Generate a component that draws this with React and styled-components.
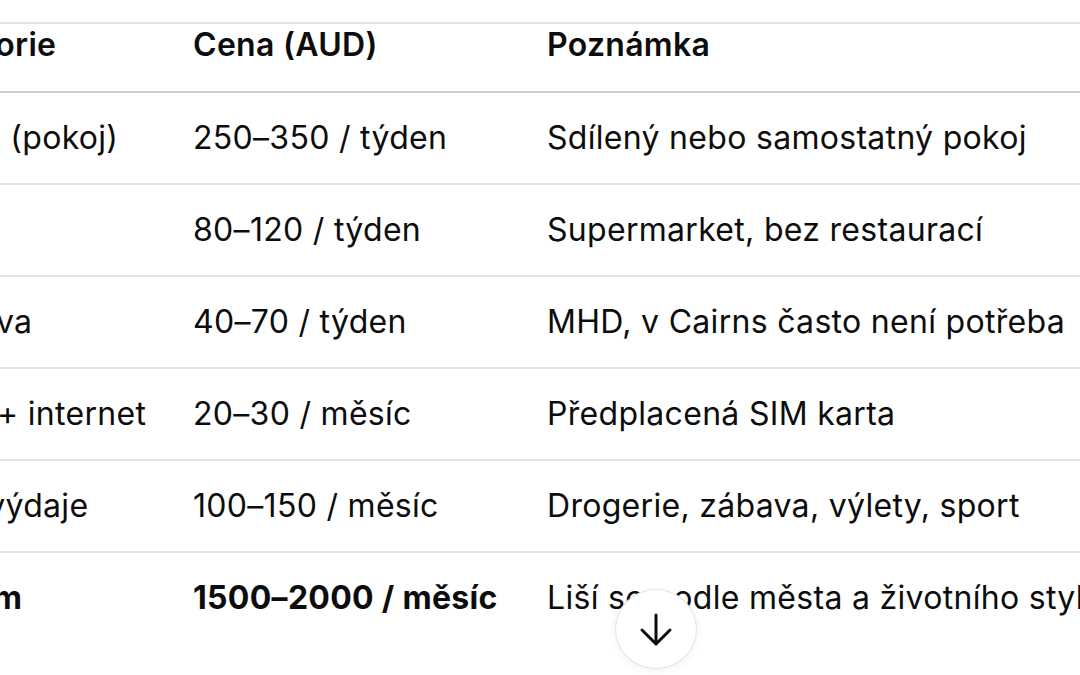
import React from 'react';
import styled, { createGlobalStyle } from 'styled-components';

const GlobalStyle = createGlobalStyle`
  html, body {
    margin: 0;
    padding: 0;
    background: #ffffff;
  }
  body {
    font-family: Inter, "Noto Sans", "Liberation Sans", sans-serif;
    color: #0d0d0d;
    -webkit-font-smoothing: antialiased;
  }
`;

const Screen = styled.div`
  position: relative;
  width: 1080px;
  height: 675px;
  overflow: hidden;
  padding-top: 22px;
  box-sizing: border-box;
`;

// the table is scrolled sideways, so its first column starts off-screen
const ScrollArea = styled.div`
  margin-left: -117px;
`;

const Table = styled.table`
  border-collapse: collapse;
  table-layout: fixed;
  width: 1400px;
  border-top: 2px solid #e2e2e2;
  font-size: 32px;
  line-height: 38px;
  letter-spacing: 0.3px;
`;

const HeadCell = styled.th`
  text-align: left;
  font-weight: 600;
  padding: 2px 20px 27px;
  border-bottom: 2px solid #cdcdcd;
  white-space: nowrap;
`;

const Row = styled.tr`
  & + & td {
    border-top: 2px solid #e3e3e3;
  }
`;

const Cell = styled.td`
  padding: 26px 20px;
  white-space: nowrap;
  font-weight: ${(p) => (p.$bold ? 650 : 400)};
  vertical-align: middle;
`;

const ScrollButton = styled.button`
  position: absolute;
  left: 615px;
  top: 589px;
  width: 82px;
  height: 80px;
  border-radius: 50%;
  background: #ffffff;
  border: 1px solid #e4e4e4;
  box-shadow: 0 2px 8px rgba(0, 0, 0, 0.06);
  padding: 0;
  display: flex;
  align-items: center;
  justify-content: center;
  cursor: pointer;
`;

const rows = [
  ['Nájem (pokoj)', '250–350 / týden', 'Sdílený nebo samostatný pokoj'],
  ['Jídlo', '80–120 / týden', 'Supermarket, bez restaurací'],
  ['Doprava', '40–70 / týden', 'MHD, v Cairns často není potřeba'],
  ['Mobil + internet', '20–30 / měsíc', 'Předplacená SIM karta'],
  ['Další výdaje', '100–150 / měsíc', 'Drogerie, zábava, výlety, sport'],
];

export default function App() {
  return (
    <>
      <GlobalStyle />
      <Screen>
        <ScrollArea>
          <Table>
            <colgroup>
              <col style={{ width: '290px' }} />
              <col style={{ width: '354px' }} />
              <col />
            </colgroup>
            <thead>
              <tr>
                <HeadCell>Kategorie</HeadCell>
                <HeadCell>Cena (AUD)</HeadCell>
                <HeadCell>Poznámka</HeadCell>
              </tr>
            </thead>
            <tbody>
              {rows.map((r) => (
                <Row key={r[0]}>
                  <Cell>{r[0]}</Cell>
                  <Cell>{r[1]}</Cell>
                  <Cell>{r[2]}</Cell>
                </Row>
              ))}
              <Row>
                <Cell $bold>Celkem</Cell>
                <Cell $bold>1500–2000 / měsíc</Cell>
                <Cell>Liší se podle města a životního stylu</Cell>
              </Row>
            </tbody>
          </Table>
        </ScrollArea>
        <ScrollButton aria-label="Posunout dolů">
          <svg width="40" height="40" viewBox="0 0 40 40" fill="none">
            <path
              d="M20 6v29M6 21l14 14 14-14"
              stroke="#0d0d0d"
              strokeWidth="3"
              strokeLinecap="round"
              strokeLinejoin="round"
            />
          </svg>
        </ScrollButton>
      </Screen>
    </>
  );
}
